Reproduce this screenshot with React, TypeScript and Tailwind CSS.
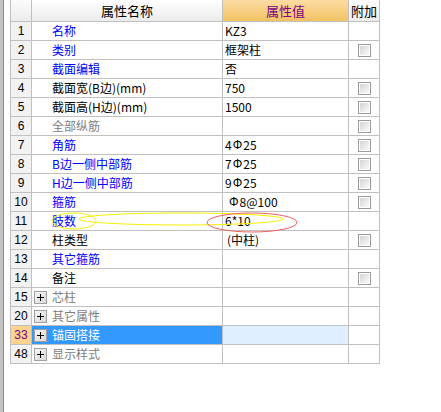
import React from "react";

type Row = {
  n: string;
  name: string;
  color: "blue" | "black" | "gray";
  value?: React.ReactNode;
  cb?: boolean;
  expand?: boolean;
  selected?: boolean;
};

const Bar = () => <span className="font-['Liberation_Sans'] text-[12px] mx-[1px]">Φ</span>;

const rows: Row[] = [
  { n: "1", name: "名称", color: "blue", value: "KZ3" },
  { n: "2", name: "类别", color: "blue", value: "框架柱", cb: true },
  { n: "3", name: "截面编辑", color: "blue", value: "否" },
  { n: "4", name: "截面宽(B边)(mm)", color: "black", value: "750", cb: true },
  { n: "5", name: "截面高(H边)(mm)", color: "black", value: "1500", cb: true },
  { n: "6", name: "全部纵筋", color: "gray", value: "", cb: true },
  { n: "7", name: "角筋", color: "blue", value: <>4<Bar />25</>, cb: true },
  { n: "8", name: "B边一侧中部筋", color: "blue", value: <>7<Bar />25</>, cb: true },
  { n: "9", name: "H边一侧中部筋", color: "blue", value: <>9<Bar />25</>, cb: true },
  { n: "10", name: "箍筋", color: "blue", value: <><span className="ml-[3px]" /><Bar />8@100</>, cb: true },
  { n: "11", name: "肢数", color: "blue", value: "6*10" },
  { n: "12", name: "柱类型", color: "black", value: <span className="ml-[2px]">(中柱)</span>, cb: true },
  { n: "13", name: "其它箍筋", color: "blue", value: "" },
  { n: "14", name: "备注", color: "black", value: "", cb: true },
  { n: "15", name: "芯柱", color: "gray", expand: true },
  { n: "20", name: "其它属性", color: "gray", expand: true },
  { n: "33", name: "锚固搭接", color: "gray", expand: true, selected: true },
  { n: "48", name: "显示样式", color: "gray", expand: true },
];

const colorCls = {
  blue: "text-[#0000ff]",
  black: "text-black",
  gray: "text-[#808080]",
};

function CheckBox() {
  return (
    <div className="w-[13px] h-[13px] border border-[#9a9a9a] bg-white p-px">
      <div className="w-full h-full bg-gradient-to-br from-[#d4d4d4] to-[#fafafa]" />
    </div>
  );
}

function PlusBox() {
  return (
    <div className="relative w-[13px] h-[13px] border border-[#a0a0a0] bg-gradient-to-br from-[#f6f6f6] to-[#d8d8d8] shrink-0">
      <div className="absolute left-[2px] top-[5px] w-[7px] h-px bg-black" />
      <div className="absolute left-[5px] top-[2px] w-px h-[7px] bg-black" />
    </div>
  );
}

export default function App() {
  return (
    <div className="relative w-[441px] h-[412px] bg-white overflow-hidden flex font-['Noto_Sans_CJK_SC',sans-serif] text-[12px] leading-none">
      <div className="w-[3px] h-full bg-[#c4c4c4]" />
      <div className="w-px h-full bg-[#8a8a8a]" />
      <div className="w-[6px] h-full bg-white" />
      <div className="self-start grid grid-cols-[20px_190px_125px_30px] gap-px bg-[#c0c0c0] px-px pb-px">
        {/* header */}
        <div className="h-[21px] bg-gradient-to-b from-[#fbfbfb] to-[#ececec]" />
        <div className="h-[21px] bg-gradient-to-b from-[#ffffff] to-[#ebebeb] flex items-center justify-center text-[13px] text-black">
          属性名称
        </div>
        <div className="h-[21px] bg-gradient-to-b from-[#fcdca3] to-[#f2c262] flex items-center justify-center text-[13px] text-[#800080]">
          属性值
        </div>
        <div className="h-[21px] bg-gradient-to-b from-[#fbfbfb] to-[#ececec] flex items-center justify-center text-[13px] text-black">
          附加
        </div>
        {rows.map((r) => (
          <React.Fragment key={r.n}>
            <div
              className={
                "h-[18px] flex items-center justify-center font-['Liberation_Sans'] text-[12px] " +
                (r.selected ? "bg-[#fdd38f] text-[#800080]" : "bg-[#f2f2f2] text-black")
              }
            >
              {r.n}
            </div>
            <div
              className={
                "h-[18px] flex items-center " +
                (r.selected ? "bg-[#3399ff] text-white" : "bg-white " + colorCls[r.color]) +
                (r.expand ? " pl-[2px]" : " pl-[20px]")
              }
            >
              {r.expand && <PlusBox />}
              <span className={r.expand ? "ml-[5px]" : ""}>{r.name}</span>
            </div>
            <div
              className={
                "h-[18px] flex items-center pl-[2px] text-black " +
                (r.selected ? "bg-[#e0efff]" : "bg-white")
              }
            >
              {r.value}
            </div>
            <div className="h-[18px] flex items-center justify-center bg-white">
              {r.cb && <CheckBox />}
            </div>
          </React.Fragment>
        ))}
      </div>
      <svg
        className="absolute left-0 top-0 pointer-events-none"
        width="441"
        height="412"
        viewBox="0 0 441 412"
      >
        <ellipse cx="181" cy="219" rx="102" ry="6" fill="none" stroke="#f5f000" strokeWidth="1" />
        <ellipse cx="74" cy="221" rx="22" ry="8" fill="none" stroke="#f5f000" strokeWidth="1" />
        <ellipse cx="252" cy="222.5" rx="45" ry="9.5" fill="none" stroke="#f06060" strokeWidth="1" />
      </svg>
    </div>
  );
}
